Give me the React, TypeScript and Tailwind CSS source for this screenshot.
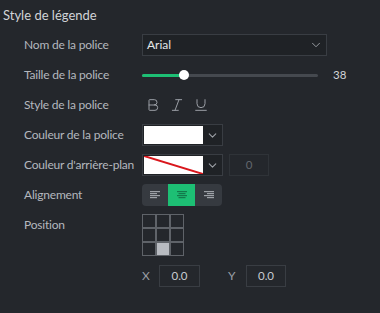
import React from "react";
import { Bold, Italic, Underline, ChevronDown } from "lucide-react";

const font = { fontFamily: 'Lato, "Noto Sans", sans-serif' };

const Label = ({ children }: { children: React.ReactNode }) => (
  <div className="w-[118px] shrink-0 whitespace-nowrap text-[12px] leading-[22px] tracking-[-0.2px] text-[#b4b8bf]">
    {children}
  </div>
);

const AlignIcon = ({ kind, color }: { kind: "left" | "center" | "right"; color: string }) => {
  const rows = [10, 7, 10, 7];
  return (
    <svg width="10" height="8" viewBox="0 0 10 8">
      {rows.map((w, i) => {
        const x = kind === "left" ? 0 : kind === "right" ? 10 - w : (10 - w) / 2;
        return <rect key={i} x={x} y={i * 2} width={w} height="1.2" fill={color} />;
      })}
    </svg>
  );
};

const ColorBox = ({ none }: { none?: boolean }) => (
  <div className="flex h-[22px] w-[81px] items-center border border-[#393d43] bg-[#1f2226]">
    <div className="relative ml-[1px] h-[18px] w-[59px] overflow-hidden bg-white">
      {none && (
        <svg className="absolute inset-0" width="59" height="18" viewBox="0 0 59 18">
          <line x1="0" y1="0" x2="59" y2="18" stroke="#d9161c" strokeWidth="2" />
        </svg>
      )}
    </div>
    <div className="flex flex-1 items-center justify-center">
      <ChevronDown size={13} strokeWidth={2} color="#9da1a7" />
    </div>
  </div>
);

export default function App() {
  return (
    <div className="h-[313px] w-[380px] bg-[#24272c]" style={font}>
      <div className="pl-[3px] pt-[5px] text-[13px] leading-[20px] text-[#d2d4d8]">Style de légende</div>
      <div className="mt-[9px] flex flex-col gap-[8px] pl-[24px]">
        <div className="flex items-center">
          <Label>Nom de la police</Label>
          <div className="flex h-[22px] w-[185px] items-center justify-between border border-[#393d43] bg-[#1f2226] pl-[4px] pr-[3px]">
            <span className="text-[12px] text-[#e4e6e9]">Arial</span>
            <ChevronDown size={14} strokeWidth={1.6} color="#9da1a7" />
          </div>
        </div>
        <div className="flex items-center">
          <Label>Taille de la police</Label>
          <div className="relative h-[22px] w-[176px]">
            <div className="absolute left-0 right-0 top-[10px] h-[3px] rounded-full bg-[#45494f]" />
            <div className="absolute left-0 top-[10px] h-[3px] w-[42px] rounded-full bg-[#1dbf74]" />
            <div className="absolute left-[37px] top-[6px] h-[10px] w-[10px] rounded-full bg-white" />
          </div>
          <span className="ml-[15px] text-[11.5px] text-[#d2d4d8]">38</span>
        </div>
        <div className="flex items-center">
          <Label>Style de la police</Label>
          <div className="flex h-[22px] items-center gap-[8px] pl-[3px] text-[#9a9ea5]">
            <Bold size={16} strokeWidth={1.5} />
            <Italic size={16} strokeWidth={1.5} />
            <Underline size={16} strokeWidth={1.5} />
          </div>
        </div>
        <div className="flex items-center">
          <Label>Couleur de la police</Label>
          <ColorBox />
        </div>
        <div className="flex items-center">
          <Label>Couleur d'arrière-plan</Label>
          <ColorBox none />
          <div className="ml-[6px] flex h-[22px] w-[40px] items-center justify-center border border-[#2f3338] text-[11.5px] text-[#62666c]">
            0
          </div>
        </div>
        <div className="flex items-center">
          <Label>Alignement</Label>
          <div className="flex h-[22px] w-[80px] overflow-hidden rounded-[4px] bg-[#363a40]">
            <div className="flex w-[26px] items-center justify-center">
              <AlignIcon kind="left" color="#9da1a7" />
            </div>
            <div className="flex w-[27px] items-center justify-center bg-[#1dbf74]">
              <AlignIcon kind="center" color="#137a4b" />
            </div>
            <div className="flex w-[27px] items-center justify-center">
              <AlignIcon kind="right" color="#9da1a7" />
            </div>
          </div>
        </div>
        <div className="flex items-start">
          <Label>Position</Label>
          <div className="grid grid-cols-3">
            {Array.from({ length: 9 }).map((_, i) => (
              <div
                key={i}
                className={
                  "h-[14px] w-[14px] border border-[#5f6369] " + (i === 7 ? "bg-[#b8bbc1]" : "bg-[#24272c]")
                }
              />
            ))}
          </div>
        </div>
        <div className="mt-[1px] flex items-center pl-[118px]">
          <span className="w-[17px] text-[12px] text-[#9a9ea5]">X</span>
          <div className="flex h-[22px] w-[41px] items-center justify-center border border-[#393d43] text-[11.5px] text-[#c8cbd0]">
            0.0
          </div>
          <span className="ml-[28px] w-[18px] text-[12px] text-[#9a9ea5]">Y</span>
          <div className="flex h-[22px] w-[40px] items-center justify-center border border-[#393d43] text-[11.5px] text-[#c8cbd0]">
            0.0
          </div>
        </div>
      </div>
    </div>
  );
}
